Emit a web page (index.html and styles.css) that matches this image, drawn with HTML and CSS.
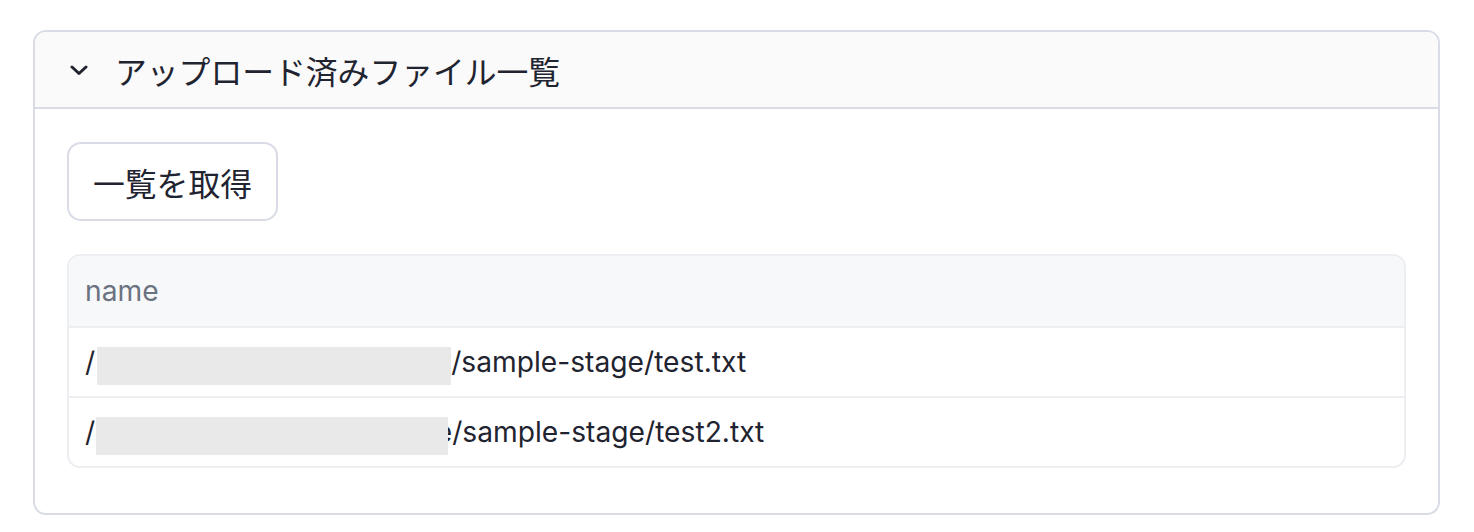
FILE: index.html
```html
<!DOCTYPE html>
<html lang="ja">
<head>
<meta charset="utf-8">
<link rel="stylesheet" href="styles.css">
</head>
<body>
<section class="card">
  <header class="card-head">
    <svg class="chev" width="18" height="11" viewBox="0 0 18 11"><path d="M2 2 L9 8.5 L16 2" fill="none" stroke="#1f2430" stroke-width="3" stroke-linecap="round" stroke-linejoin="round"/></svg>
    <span class="title">アップロード済みファイル一覧</span>
  </header>
  <div class="card-body">
    <button class="btn">一覧を取得</button>
    <div class="table">
      <div class="row head">name</div>
      <div class="row">/<span class="redact r1"></span>/sample-stage/test.txt</div>
      <div class="row">/<span class="redact r2"></span><span class="frag">e</span>/sample-stage/test2.txt</div>
    </div>
  </div>
</section>
</body>
</html>
```
FILE: styles.css
```css
html, body { margin: 0; padding: 0; background: #ffffff; }
body {
  font-family: "Inter", "Noto Sans CJK JP", sans-serif;
  color: #1f2430;
  padding: 30px 0 0 33px;
}
.card {
  width: 1407px;
  box-sizing: border-box;
  border: 2px solid #d9dce6;
  border-radius: 13px;
  overflow: hidden;
}
.card-head {
  height: 77px;
  box-sizing: border-box;
  background: #fafafa;
  border-bottom: 2px solid #d9dce6;
  display: flex;
  align-items: center;
  padding-left: 35px;
}
.chev { display: block; margin-right: 27px; margin-top: 1px; }
.title {
  font-family: "Noto Sans CJK JP", sans-serif;
  font-size: 31.8px;
  color: #1f2430;
}
.card-body {
  padding: 33px 32px 45px 32px;
}
.btn {
  display: block;
  width: 211px;
  height: 79px;
  box-sizing: border-box;
  border: 2px solid #d9dce6;
  border-radius: 14px;
  background: #ffffff;
  font-family: "Noto Sans CJK JP", sans-serif;
  font-size: 31.8px;
  color: #1f2430;
  padding: 0;
}
.table {
  margin-top: 33px;
  border: 2px solid #eceef2;
  border-radius: 13px;
  overflow: hidden;
}
.row {
  height: 70px;
  box-sizing: border-box;
  display: flex;
  align-items: center;
  padding-left: 16px;
  font-size: 28.2px;
  border-top: 2px solid #eceef2;
  white-space: pre;
}
.row.head {
  border-top: none;
  background: #f7f8fa;
  color: #6b7280;
}
.redact {
  display: inline-block;
  background: #e9e9e9;
  height: 38px;
  margin-top: 8px;
}
.r1 { width: 354px; margin-left: 2px; }
.r2 { width: 352px; margin-left: 1px; }
.frag {
  display: inline-block;
  width: 4px;
  overflow: hidden;
  direction: rtl;
}
```
